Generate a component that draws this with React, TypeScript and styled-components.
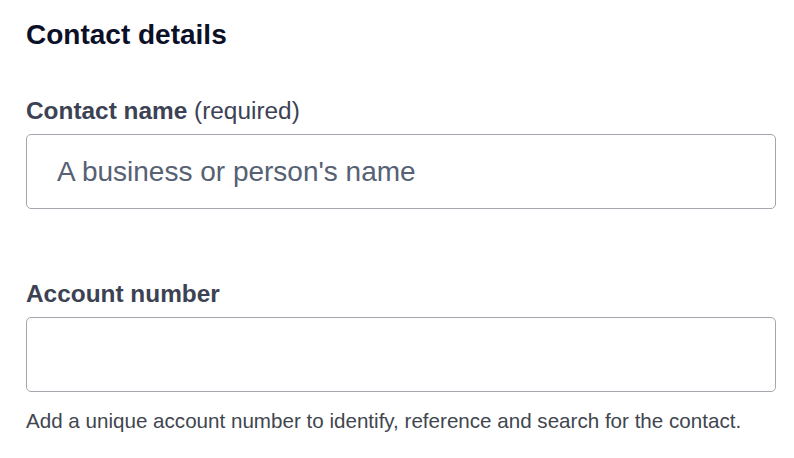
import React, { FC } from "react";
import styled, { createGlobalStyle } from "styled-components";

const GlobalStyle = createGlobalStyle`
  html, body {
    margin: 0;
    padding: 0;
    background: #fff;
  }
  body {
    font-family: "Liberation Sans", Arial, sans-serif;
  }
`;

const App: FC = () => {
  return (
    <>
      <GlobalStyle />
      <StyledSection>
        <StyledTitle>Contact details</StyledTitle>

        <StyledField>
          <StyledLabel htmlFor="contact-name">
            Contact name <StyledHint>(required)</StyledHint>
          </StyledLabel>
          <StyledInput id="contact-name" placeholder="A business or person's name" />
        </StyledField>

        <StyledField spaced>
          <StyledLabel htmlFor="account-number">Account number</StyledLabel>
          <StyledInput id="account-number" />
          <StyledHelp>Add a unique account number to identify, reference and search for the contact.</StyledHelp>
        </StyledField>
      </StyledSection>
    </>
  );
};

export default App;

const StyledSection = styled.section`
  width: 750px;
  padding: 18px 0 0 26px;
  display: flex;
  flex-direction: column;
`;
const StyledTitle = styled.h2`
  margin: 0;
  font-size: 28px;
  line-height: 34px;
  font-weight: 700;
  color: #0b1029;
`;
const StyledField = styled.div<{ spaced?: boolean }>`
  display: flex;
  flex-direction: column;
  margin-top: ${(p) => (p.spaced ? "69px" : "43px")};
`;
const StyledLabel = styled.label`
  font-size: 24.4px;
  line-height: 32px;
  font-weight: 700;
  color: #3c4253;
  margin-bottom: 7px;
`;
const StyledHint = styled.span`
  font-weight: 400;
`;
const StyledInput = styled.input`
  box-sizing: border-box;
  width: 750px;
  height: 75px;
  margin: 0;
  padding: 0 30px;
  border: 1px solid #a3a6ad;
  border-radius: 5px;
  font-family: "Liberation Sans", Arial, sans-serif;
  font-size: 28px;
  color: #1f2633;
  outline: none;

  &::placeholder {
    color: #566173;
    opacity: 1;
  }
`;
const StyledHelp = styled.p`
  margin: 16px 0 0;
  font-size: 20.6px;
  line-height: 26px;
  color: #41464f;
`;
